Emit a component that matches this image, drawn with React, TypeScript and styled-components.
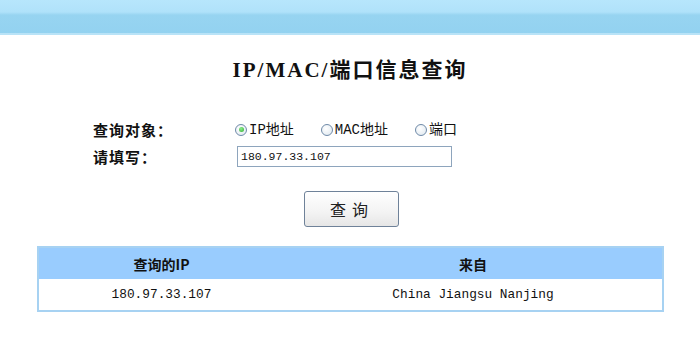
import React, { useState } from "react";
import styled, { createGlobalStyle } from "styled-components";

const GlobalStyle = createGlobalStyle`
  body {
    margin: 0;
    background: #ffffff;
    font-family: "Liberation Mono", "Noto Sans CJK SC", monospace;
    color: #111;
  }
`;

const TopBand = styled.div`
  height: 33px;
  background: linear-gradient(#b7e6fc 0px, #b0e2fa 12px, #97d4f1 15px, #93d2f0 100%);
  border-bottom: 2px solid #b9e3f7;
`;

const Title = styled.h1`
  margin: 23px 0 0;
  text-align: center;
  font-family: "Liberation Serif", "Noto Sans CJK SC", serif;
  font-size: 21px;
  letter-spacing: 2px;
  font-weight: bold;
  line-height: 24px;
`;

const Form = styled.div`
  margin: 37px 0 0 93px;
  display: grid;
  grid-template-columns: 142px auto;
  row-gap: 6px;
  align-items: center;
`;

const Label = styled.div`
  font-family: "Noto Sans CJK SC", sans-serif;
  font-weight: bold;
  font-size: 15px;
  letter-spacing: 1px;
  line-height: 21px;
`;

const RadioGroup = styled.div`
  display: flex;
  align-items: center;
  gap: 27px;
`;

const RadioLabel = styled.label`
  display: flex;
  align-items: center;
  gap: 2px;
  font-family: "Liberation Mono", "Noto Sans CJK SC", monospace;
  font-size: 14px;
  line-height: 20px;
  cursor: pointer;
`;

const RadioDot = styled.input`
  appearance: none;
  margin: 0;
  width: 12px;
  height: 12px;
  border-radius: 50%;
  border: 1px solid #6f8aa8;
  background: radial-gradient(circle at 40% 35%, #ffffff, #dce6ee);
  position: relative;
  &:checked::after {
    content: "";
    position: absolute;
    left: 2.5px;
    top: 2.5px;
    width: 5px;
    height: 5px;
    border-radius: 50%;
    background: radial-gradient(circle at 40% 35%, #8ef08e, #2ea82e);
  }
`;

const TextInput = styled.input`
  box-sizing: border-box;
  width: 215px;
  height: 21px;
  margin-left: 2px;
  padding: 0 3px;
  border: 1px solid #8ea5bd;
  font-family: "Liberation Mono", monospace;
  font-size: 11.5px;
  color: #111;
  outline: none;
`;

const ButtonRow = styled.div`
  display: flex;
  justify-content: center;
  margin-top: 24px;
  padding-left: 2px;
`;

const Button = styled.button`
  width: 95px;
  height: 36px;
  border: 1px solid #6f8299;
  border-radius: 3px;
  background: linear-gradient(#ffffff, #f3f3f3 60%, #e6e6e6);
  font-family: "Noto Sans CJK SC", sans-serif;
  font-size: 16px;
  letter-spacing: 6px;
  padding-left: 8px;
  color: #222;
  cursor: pointer;
`;

const Table = styled.table`
  margin: 19px 0 0 37px;
  width: 627px;
  border-collapse: collapse;
  border: 2px solid #a7d2f2;
`;

const HeadCell = styled.th`
  height: 31px;
  padding: 0;
  background: #99ccfe;
  font-family: "Noto Sans CJK SC", sans-serif;
  font-size: 14px;
  font-weight: bold;
  text-align: center;
`;

const Cell = styled.td`
  height: 31px;
  padding: 0;
  background: #ffffff;
  font-family: "Liberation Mono", monospace;
  font-size: 12.8px;
  text-align: center;
`;

type Target = "ip" | "mac" | "port";

export default function App() {
  const [target, setTarget] = useState<Target>("ip");
  const [value, setValue] = useState("180.97.33.107");

  const options: { key: Target; label: string }[] = [
    { key: "ip", label: "IP地址" },
    { key: "mac", label: "MAC地址" },
    { key: "port", label: "端口" },
  ];

  return (
    <>
      <GlobalStyle />
      <TopBand />
      <Title>IP/MAC/端口信息查询</Title>
      <Form>
        <Label>查询对象：</Label>
        <RadioGroup>
          {options.map((o) => (
            <RadioLabel key={o.key}>
              <RadioDot
                type="radio"
                name="target"
                checked={target === o.key}
                onChange={() => setTarget(o.key)}
              />
              {o.label}
            </RadioLabel>
          ))}
        </RadioGroup>
        <Label>请填写：</Label>
        <div>
          <TextInput value={value} onChange={(e) => setValue(e.target.value)} />
        </div>
      </Form>
      <ButtonRow>
        <Button type="button">查询</Button>
      </ButtonRow>
      <Table>
        <colgroup>
          <col style={{ width: 246 }} />
          <col />
        </colgroup>
        <thead>
          <tr>
            <HeadCell>查询的IP</HeadCell>
            <HeadCell>来自</HeadCell>
          </tr>
        </thead>
        <tbody>
          <tr>
            <Cell>180.97.33.107</Cell>
            <Cell>China Jiangsu Nanjing</Cell>
          </tr>
        </tbody>
      </Table>
    </>
  );
}
